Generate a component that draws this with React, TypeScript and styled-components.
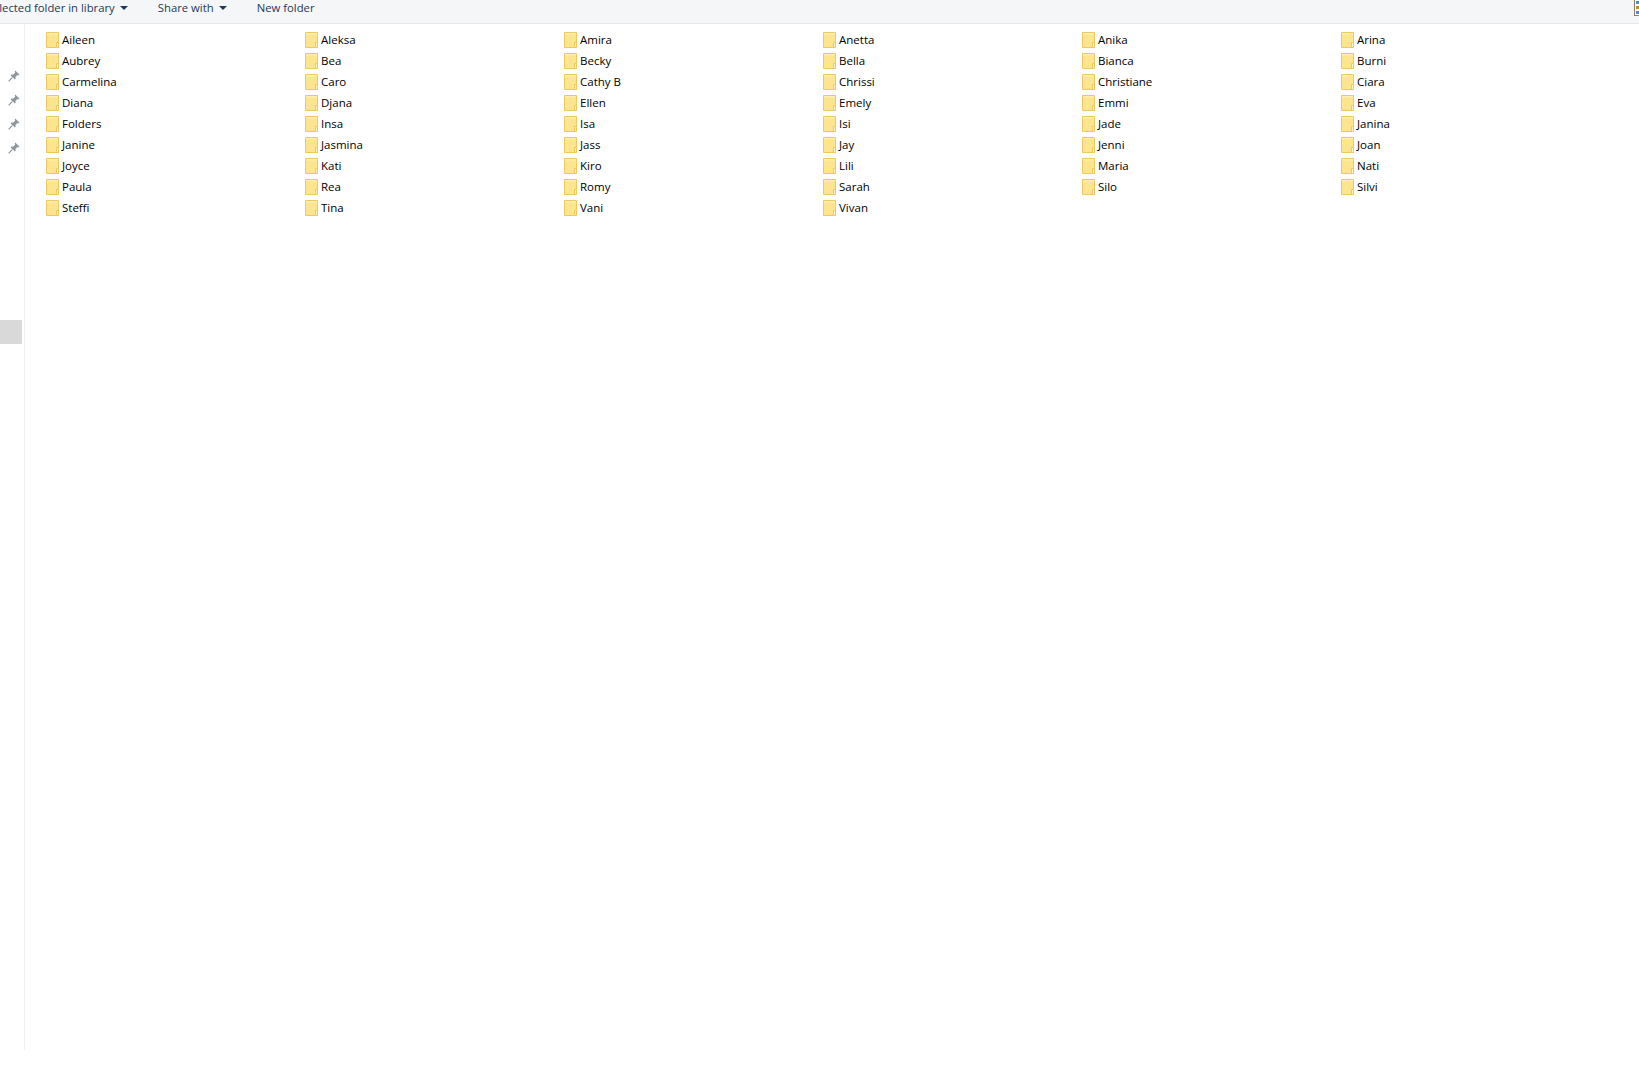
import React from "react";
import styled, { createGlobalStyle } from "styled-components";

const folders = [
  "Aileen", "Aleksa", "Amira", "Anetta", "Anika", "Arina",
  "Aubrey", "Bea", "Becky", "Bella", "Bianca", "Burni",
  "Carmelina", "Caro", "Cathy B", "Chrissi", "Christiane", "Ciara",
  "Diana", "Djana", "Ellen", "Emely", "Emmi", "Eva",
  "Folders", "Insa", "Isa", "Isi", "Jade", "Janina",
  "Janine", "Jasmina", "Jass", "Jay", "Jenni", "Joan",
  "Joyce", "Kati", "Kiro", "Lili", "Maria", "Nati",
  "Paula", "Rea", "Romy", "Sarah", "Silo", "Silvi",
  "Steffi", "Tina", "Vani", "Vivan",
];

function FolderIcon() {
  return (
    <FolderSvg viewBox="0 0 13 16" width="13" height="16">
      <path d="M0.5 0.5H12.5V15.5H0.5Z" fill="#fde58f" stroke="#efc95f" />
      <path d="M1 1H12V2.5H1Z" fill="#ffeeb0" />
      <path d="M10.5 15.5V10.5H12.5V15.5Z" fill="#fff3c8" stroke="#efc95f" />
    </FolderSvg>
  );
}

function PinIcon() {
  return (
    <svg viewBox="0 0 12 12" width="12" height="12">
      <path d="M7.2 0.6L11.4 4.6L10.2 5.4L9.4 5L7.4 7.2L7.6 9L6.8 9.6L2.6 5.4L3.2 4.6L5 4.8L7.2 2.8L6.8 1.6Z" fill="#8e979d" />
      <path d="M4.2 7.6L0.6 11.4" stroke="#8e979d" strokeWidth="1.2" fill="none" />
    </svg>
  );
}

function ToolbarMenu({ label, clipped }: { label: string; clipped?: boolean }) {
  return (
    <MenuItem $clipped={clipped}>
      {label}
      <Caret />
    </MenuItem>
  );
}

export default function App() {
  return (
    <>
      <GlobalStyle />
      <Page>
        <Toolbar>
          <ToolbarMenu label="Include selected folder in library" clipped />
          <ToolbarMenu label="Share with" />
          <PlainItem>New folder</PlainItem>
          <ViewSwitch>
            <ViewBar $color="#4a8fd0" />
            <ViewBar $color="#b98a2e" />
            <ViewBar $color="#4a8fd0" />
          </ViewSwitch>
        </Toolbar>
        <Body>
          <NavPane>
            <PinGroup>
              <PinIcon />
              <PinIcon />
              <PinIcon />
              <PinIcon />
            </PinGroup>
            <NavSelection />
          </NavPane>
          <FolderGrid>
            {folders.map((name) => (
              <FolderRow key={name}>
                <FolderIcon />
                <FolderName>{name}</FolderName>
              </FolderRow>
            ))}
          </FolderGrid>
        </Body>
      </Page>
    </>
  );
}

const GlobalStyle = createGlobalStyle`
  html, body {
    margin: 0;
    padding: 0;
    background: #ffffff;
  }
  body {
    font-family: "Open Sans", "Noto Sans", sans-serif;
    font-size: 11.5px;
    color: #000000;
  }
`;

const Page = styled.div`
  width: 1639px;
  height: 1073px;
  overflow: hidden;
  display: flex;
  flex-direction: column;
`;

const Toolbar = styled.div`
  height: 23px;
  flex: none;
  display: flex;
  align-items: flex-start;
  background: #f5f6f7;
  border-bottom: 1px solid #e6e7e8;
  color: #1e395b;
  font-size: 11.3px;
  line-height: 15px;
  overflow: hidden;
`;

const MenuItem = styled.div<{ $clipped?: boolean }>`
  display: flex;
  align-items: center;
  white-space: nowrap;
  margin-left: ${(p) => (p.$clipped ? "-54px" : "0")};
  margin-right: 30px;
`;

const PlainItem = styled.div`
  white-space: nowrap;
`;

const Caret = styled.span`
  width: 0;
  height: 0;
  margin-left: 5px;
  border-left: 4px solid transparent;
  border-right: 4px solid transparent;
  border-top: 4px solid #1e395b;
`;

const ViewSwitch = styled.div`
  margin-left: auto;
  width: 3px;
  height: 15px;
  border: 1px solid #7b8087;
  border-top: none;
  border-right: none;
  background: #ffffff;
  display: flex;
  flex-direction: column;
  justify-content: space-around;
  padding-left: 1px;
`;

const ViewBar = styled.span<{ $color: string }>`
  width: 3px;
  height: 3px;
  background: ${(p) => p.$color};
`;

const Body = styled.div`
  display: flex;
  flex: 1;
  min-height: 0;
`;

const NavPane = styled.div`
  width: 24px;
  height: 1026px;
  flex: none;
  border-right: 1px solid #f0f0f0;
`;

const PinGroup = styled.div`
  display: flex;
  flex-direction: column;
  gap: 12px;
  padding: 46px 0 0 8px;
`;

const NavSelection = styled.div`
  width: 22px;
  height: 24px;
  margin-top: 166px;
  background: #d9d9d9;
`;

const FolderGrid = styled.div`
  display: grid;
  grid-template-columns: repeat(6, 259px);
  grid-auto-rows: 21px;
  padding: 5px 0 0 21px;
  align-content: start;
`;

const FolderRow = styled.div`
  display: flex;
  align-items: center;
  gap: 3px;
  white-space: nowrap;
`;

const FolderSvg = styled.svg`
  flex: none;
`;

const FolderName = styled.span`
  line-height: 16px;
`;
